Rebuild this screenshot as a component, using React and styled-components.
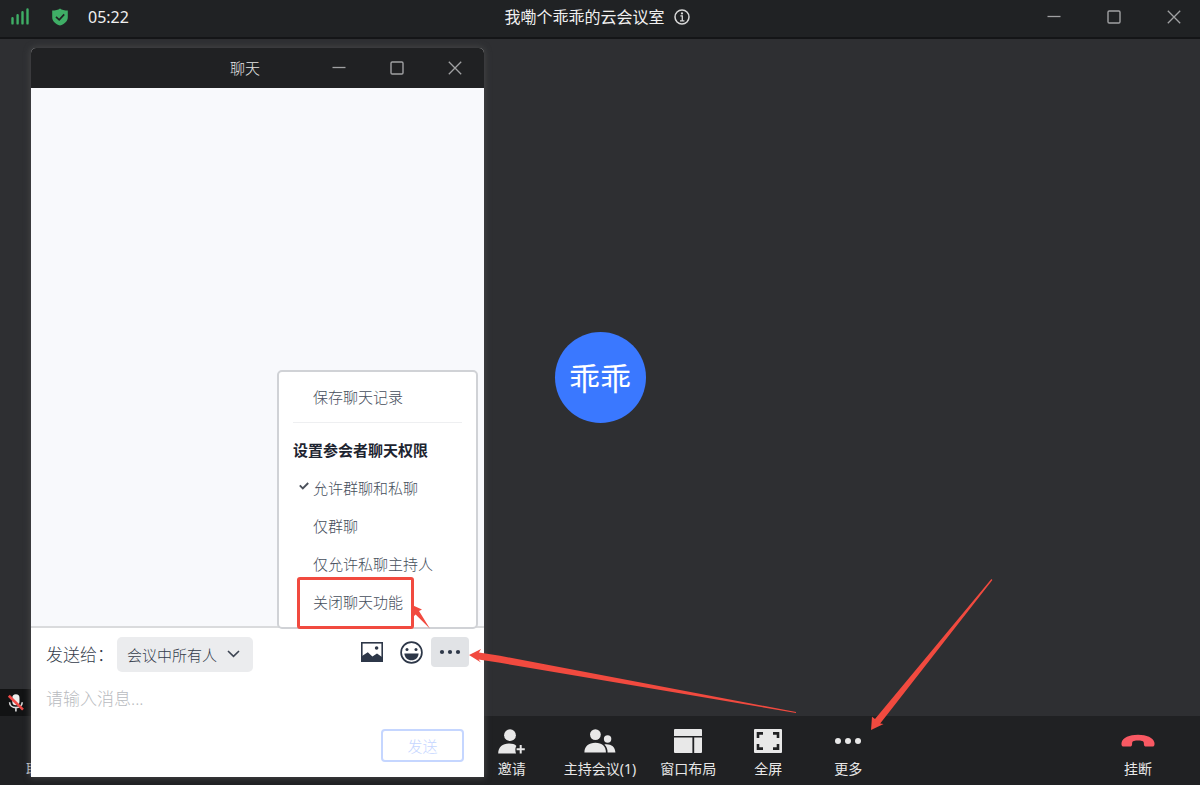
import React from "react";
import styled, { createGlobalStyle } from "styled-components";

const GlobalStyle = createGlobalStyle`
  *, *::before, *::after { box-sizing: border-box; }
  body {
    margin: 0;
    background: #2e2f32;
    font-family: "Noto Sans", "Noto Sans CJK SC", sans-serif;
    font-weight: 300;
  }
  button, select, textarea { font: inherit; margin: 0; padding: 0; border: 0; background: none; color: inherit; }
  h1, h2, ul, li { margin: 0; padding: 0; list-style: none; font-weight: inherit; }
  svg { display: block; }
`;

const Meeting = styled.div`
  position: relative;
  display: flex;
  flex-direction: column;
  min-height: 100vh;
  overflow: hidden;
`;

const TitleBar = styled.header`
  display: grid;
  grid-template-columns: 1fr auto 1fr;
  align-items: center;
  height: 39px;
  padding-bottom: 4px;
  background: #202224;
  border-bottom: 2px solid #141517;
  color: #f0f0f0;
`;

const Status = styled.div`
  display: flex;
  align-items: center;
  padding-left: 11px;
`;

const Timer = styled.time`
  margin-left: 20px;
  font-size: 16px;
  line-height: 24px;
  font-weight: 400;
`;

const ShieldSlot = styled.span`
  margin-left: 23px;
`;

const RoomTitle = styled.div`
  display: flex;
  align-items: center;
  gap: 9px;
  padding-right: 6px;
`;

const RoomName = styled.h1`
  font-size: 16px;
  line-height: 24px;
  font-weight: 400;
`;

const IconButton = styled.button`
  display: flex;
  align-items: center;
  justify-content: center;
  width: ${(p) => p.$width}px;
  height: ${(p) => p.$height}px;
  border-radius: 4px;
  background: ${(p) => (p.$active ? "#e1e3e6" : "transparent")};
  color: ${(p) => p.$color || "#a0a1a3"};
  cursor: pointer;
`;

const WindowControls = styled.div`
  display: flex;
  justify-content: flex-end;
  gap: ${(p) => p.$gap || 0}px;
`;

const Stage = styled.main`
  position: relative;
  flex: 1;
  display: flex;
  align-items: center;
  justify-content: center;
  background: #2e2f32;
`;

const Avatar = styled.div`
  display: flex;
  align-items: center;
  justify-content: center;
  width: 91px;
  height: 91px;
  border-radius: 50%;
  background: #3a78ff;
  color: #fff;
  font-size: 31px;
  line-height: 40px;
  font-weight: 400;
`;

const MutedBadge = styled.div`
  position: absolute;
  left: 0;
  bottom: 0;
  display: flex;
  align-items: center;
  width: 120px;
  height: 27px;
  padding-left: 7px;
  background: #121314;
`;

const ToolBar = styled.footer`
  display: grid;
  grid-template-columns: 1fr auto 1fr;
  height: 69px;
  background: #202123;
`;

const ToolGroup = styled.div`
  display: flex;
  justify-content: ${(p) => p.$justify || "flex-start"};
  padding: ${(p) => p.$padding || "0"};
`;

const Tool = styled.button`
  position: relative;
  display: flex;
  flex-direction: column;
  align-items: ${(p) => p.$align || "center"};
  min-width: 80px;
  padding: 10px 12px 0;
  color: #e8e8e8;
  cursor: pointer;
`;

const ToolIcon = styled.span`
  display: flex;
  align-items: center;
  height: 30px;
`;

const ToolLabel = styled.span`
  margin-top: 2px;
  font-size: 14px;
  line-height: 22px;
  font-weight: 400;
  white-space: nowrap;
`;

const ChatWindow = styled.section`
  position: absolute;
  left: 31px;
  top: 48px;
  bottom: 8px;
  display: flex;
  flex-direction: column;
  width: 453px;
  border-radius: 5px 5px 0 0;
  background: #fff;
  box-shadow: 0 0 6px 1px #444546;
`;

const ChatHeader = styled.header`
  display: flex;
  align-items: center;
  justify-content: flex-end;
  height: 40px;
  border-radius: 5px 5px 0 0;
  background: #202123;
  color: #e4e4e4;
`;

const ChatTitle = styled.h2`
  padding-right: 50px;
  font-size: 15px;
  line-height: 22px;
`;

const Messages = styled.div`
  flex: 1;
  background: #f8f9fc;
`;

const Composer = styled.form`
  position: relative;
  display: flex;
  flex-direction: column;
  height: 151px;
  padding: 9px 15px 15px;
  border-top: 2px solid #dadbdd;
  color: #333b4a;
`;

const ComposerRow = styled.div`
  display: flex;
  align-items: flex-start;
`;

const RecipientLabel = styled.label`
  width: 71px;
  font-size: 17px;
  line-height: 35px;
  white-space: nowrap;
`;

const RecipientField = styled.span`
  position: relative;
  svg {
    position: absolute;
    right: 13px;
    top: 13px;
    pointer-events: none;
  }
`;

const Recipient = styled.select`
  appearance: none;
  width: 136px;
  height: 35px;
  padding-left: 10px;
  border-radius: 5px;
  background: #ebecee;
  font-size: 15px;
`;

const ComposerTools = styled.div`
  display: flex;
  gap: 1px;
  margin-left: auto;
`;

const MessageInput = styled.textarea`
  flex: 1;
  min-height: 0;
  margin-top: 14px;
  resize: none;
  outline: none;
  font-size: 17px;
  line-height: 26px;
  &::placeholder { color: #b9bbc0; opacity: 1; }
`;

const SendButton = styled.button`
  align-self: flex-end;
  width: 83px;
  height: 33px;
  margin-right: 5px;
  border: 2px solid #c5d6ff;
  border-radius: 4px;
  color: #c5d6ff;
  font-size: 15px;
  line-height: 22px;
`;

const Menu = styled.div`
  position: absolute;
  right: 6px;
  bottom: 148px;
  width: 201px;
  padding: 6px 14px;
  border: 2px solid #d0d2d6;
  border-radius: 5px;
  background: #fff;
  color: #454d5b;
  font-size: 15px;
  line-height: 38px;
`;

const MenuItem = styled.button`
  position: relative;
  display: block;
  width: 100%;
  height: 38px;
  padding-left: 20px;
  text-align: left;
  cursor: pointer;
`;

const CheckSlot = styled.span`
  position: absolute;
  left: 6px;
  top: 13px;
`;

const MenuHeading = styled.h2`
  color: #1d2430;
  font-size: 15px;
  font-weight: 700;
`;

const MenuDivider = styled.hr`
  height: 1px;
  margin: 6px 0 8px;
  border: 0;
  background: #eeeff1;
`;

const Highlight = styled.span`
  position: absolute;
  left: 4px;
  top: -6px;
  width: 117px;
  height: 52px;
  border: 3px solid #f14a3f;
  border-radius: 3px;
`;

const Arrow = styled.svg`
  position: absolute;
  left: ${(p) => p.$left}px;
  top: ${(p) => p.$top}px;
  z-index: 1;
  fill: #f14a3f;
  pointer-events: none;
`;

const line = { fill: "none", stroke: "currentColor" };

const MinimizeIcon = () => (
  <svg width="14" height="14" viewBox="0 0 14 14" {...line}><path d="M0.5 6.5h13" strokeWidth="1.3" /></svg>
);
const MaximizeIcon = () => (
  <svg width="14" height="14" viewBox="0 0 14 14" {...line}><rect x="1" y="1" width="12" height="12" rx="1.2" strokeWidth="1.4" /></svg>
);
const CloseIcon = () => (
  <svg width="14" height="14" viewBox="0 0 14 14" {...line}><path d="M0.8 0.8l12.4 12.4M13.2 0.8L0.8 13.2" strokeWidth="1.3" /></svg>
);

const SignalIcon = () => (
  <svg width="18" height="17" viewBox="0 0 18 17" fill="none" stroke="#3fae66" strokeWidth="2.4" strokeLinecap="round">
    <path d="M1.5 10.2v5.2M6.6 7.2v8.2M11.5 4.3v11.1M16.5 1.4v14" />
  </svg>
);
const ShieldIcon = () => (
  <svg width="16" height="18" viewBox="0 0 16 18">
    <path d="M8 0.4C9.8 1.9 12.6 2.4 15.8 2.4V9.2C15.8 13.2 12.6 16 8 17.6C3.4 16 0.2 13.2 0.2 9.2V2.4C3.4 2.4 6.2 1.9 8 0.4Z" fill="#3fae66" />
    <path d="M4 8.8l3.2 3 5-5.4" fill="none" stroke="#202224" strokeWidth="1.7" />
  </svg>
);
const InfoIcon = () => (
  <svg width="16" height="16" viewBox="0 0 16 16" fill="none" stroke="#d8d8d8">
    <circle cx="8" cy="8" r="7" strokeWidth="1.5" />
    <path d="M6.4 6.9H8.3V11.6M6 11.8h4.4" strokeWidth="1.3" />
    <circle cx="8" cy="4.4" r="1.1" fill="#d8d8d8" stroke="none" />
  </svg>
);
const MutedMicIcon = () => (
  <svg width="18" height="18" viewBox="0 0 18 18" fill="none">
    <rect x="5.3" y="0.3" width="7.2" height="11" rx="3.6" fill="#eee" />
    <path d="M2.6 8.2c0 3.4 2.8 5.4 6.3 5.4s6.3-2 6.3-5.4M8.9 13.6v3.9" stroke="#ddd" strokeWidth="1.6" />
    <path d="M1.8 1.8L16 15.6" stroke="#f04b48" strokeWidth="2.6" />
  </svg>
);
const InviteIcon = () => (
  <svg width="27" height="25" viewBox="0 0 27 25" fill="currentColor">
    <circle cx="12" cy="6.2" r="5.9" />
    <path d="M0.2 24.6C0.2 18 4.6 14.6 11 14.6C14.2 14.6 17 15.3 18.4 17C17.2 18.6 17 22 18 24.6Z" />
    <path d="M18.6 20.2h8.2M22.7 16v8.4" stroke="currentColor" strokeWidth="2" />
  </svg>
);
const HostIcon = () => (
  <svg width="32" height="24" viewBox="0 0 32 24" fill="currentColor">
    <circle cx="11.4" cy="5.6" r="5.4" />
    <circle cx="23.6" cy="10" r="3.7" />
    <path d="M0.4 23.6C0.4 17.2 4.6 13.8 11.4 13.8S21.9 17.2 21.9 23.6Z" />
    <path d="M20.4 15.4C26.6 14.6 31.2 17.4 31.4 23.6H23.6C23.6 20.2 22.8 17.6 20.4 15.4Z" />
  </svg>
);
const LayoutIcon = () => (
  <svg width="28" height="24" viewBox="0 0 28 24" fill="currentColor">
    <path d="M1 0H27a1 1 0 0 1 1 1V7H0V1A1 1 0 0 1 1 0ZM0 8.6H18.4V24H1A1 1 0 0 1 0 23ZM20.2 8.6H28V23a1 1 0 0 1-1 1H20.2Z" />
  </svg>
);
const FullscreenIcon = () => (
  <svg width="28" height="24" viewBox="0 0 28 24">
    <rect width="28" height="24" rx="1" fill="#e8e8e8" />
    <path d="M4 9V4.4H9M19 4.4h5V9M24 15v4.6H19M9 19.6H4V15" fill="none" stroke="#202123" strokeWidth="2.6" />
  </svg>
);
const MoreIcon = ({ width, r, gap }) => (
  <svg width={width} height="8" viewBox={`0 0 ${width} 8`} fill="currentColor">
    {[-1, 0, 1].map((i) => <circle key={i} cx={width / 2 + i * gap} cy="4" r={r} />)}
  </svg>
);
const HangUpIcon = () => (
  <svg width="34" height="14" viewBox="0 0 34 14">
    <path d="M0.6 8.6C1.6 3.6 8.4 0.8 17 0.8S32.4 3.6 33.4 8.6C33.8 10.8 33.4 12.6 31.8 12.6H25.4C23.6 12.6 22.8 11.6 22.9 10C23 8.2 22.6 7.2 21 6.9C18.4 6.4 15.6 6.4 13 6.9C11.4 7.2 11 8.2 11.1 10C11.2 11.6 10.4 12.6 8.6 12.6H2.2C0.6 12.6 0.2 10.8 0.6 8.6Z" fill="#f95963" />
  </svg>
);
const ImageIcon = () => (
  <svg width="22" height="20" viewBox="0 0 22 20">
    <rect x="0.8" y="0.8" width="20.4" height="18.4" fill="none" stroke="currentColor" strokeWidth="1.6" />
    <circle cx="15.6" cy="6" r="1.8" fill="currentColor" />
    <path d="M1 14L6.8 10.2L11.4 14.6L16 11.4L21 15V19.4H1Z" fill="currentColor" />
  </svg>
);
const SmileIcon = () => (
  <svg width="23" height="23" viewBox="0 0 23 23">
    <circle cx="11.5" cy="11.5" r="10.4" fill="none" stroke="currentColor" strokeWidth="1.7" />
    <circle cx="7" cy="8.6" r="1.5" fill="currentColor" />
    <circle cx="16" cy="8.6" r="1.5" fill="currentColor" />
    <path d="M4.4 12.4H18.6C18.4 16.6 15.4 19.2 11.5 19.2S4.6 16.6 4.4 12.4Z" fill="currentColor" />
  </svg>
);
const ChevronIcon = () => (
  <svg width="13" height="8" viewBox="0 0 13 8" fill="none" stroke="#3c4452" strokeWidth="1.6"><path d="M1 1l5.5 5.4L12 1" /></svg>
);
const CheckIcon = () => (
  <svg width="10" height="8" viewBox="0 0 10 8" fill="none" stroke="#4b515b" strokeWidth="1.9"><path d="M0.8 3.4l3 3L9.2 1" /></svg>
);

const Controls = ({ width, gap }) => (
  <WindowControls $gap={gap}>
    <IconButton type="button" aria-label="最小化" $width={width} $height={32}><MinimizeIcon /></IconButton>
    <IconButton type="button" aria-label="最大化" $width={width} $height={32}><MaximizeIcon /></IconButton>
    <IconButton type="button" aria-label="关闭" $width={width} $height={32}><CloseIcon /></IconButton>
  </WindowControls>
);

const ToolButton = ({ icon, label, align, children }) => (
  <Tool type="button" $align={align}>
    <ToolIcon>{icon}</ToolIcon>
    <ToolLabel>{label}</ToolLabel>
    {children}
  </Tool>
);

const ChatMenu = () => (
  <Menu>
    <MenuItem type="button">保存聊天记录</MenuItem>
    <MenuDivider />
    <MenuHeading>设置参会者聊天权限</MenuHeading>
    <ul>
      <li><MenuItem type="button"><CheckSlot><CheckIcon /></CheckSlot>允许群聊和私聊</MenuItem></li>
      <li><MenuItem type="button">仅群聊</MenuItem></li>
      <li><MenuItem type="button">仅允许私聊主持人</MenuItem></li>
      <li>
        <MenuItem type="button">
          关闭聊天功能
          <Highlight />
          <Arrow $left={118} $top={21} width="22" height="26" viewBox="0 0 22 26">
            <path d="M1 1L11 5.4L8 7L19 24.8L4.6 10.4L2 13Z" />
          </Arrow>
        </MenuItem>
      </li>
    </ul>
  </Menu>
);

const Chat = () => (
  <ChatWindow>
    <ChatHeader>
      <ChatTitle>聊天</ChatTitle>
      <Controls width={58} />
    </ChatHeader>
    <Messages />
    <Composer onSubmit={(e) => e.preventDefault()}>
      <ComposerRow>
        <RecipientLabel htmlFor="recipient">发送给：</RecipientLabel>
        <RecipientField>
          <Recipient id="recipient"><option>会议中所有人</option></Recipient>
          <ChevronIcon />
        </RecipientField>
        <ComposerTools>
          <IconButton type="button" aria-label="图片" $width={38} $height={30} $color="#2d3748"><ImageIcon /></IconButton>
          <IconButton type="button" aria-label="表情" $width={38} $height={30} $color="#2d3748"><SmileIcon /></IconButton>
          <IconButton type="button" aria-label="更多选项" $width={38} $height={30} $color="#2d3748" $active>
            <MoreIcon width={22} r={2.1} gap={8} />
          </IconButton>
        </ComposerTools>
      </ComposerRow>
      <MessageInput aria-label="消息" placeholder="请输入消息..." />
      <SendButton type="submit">发送</SendButton>
      <ChatMenu />
      <Arrow $left={438} $top={20} width="328" height="66" viewBox="0 0 328 66">
        <path d="M0 7L12 1L10 4.6L31 7.8L327 64L327 65L31 14.8L9.6 11.4L12 14.4Z" />
      </Arrow>
    </Composer>
  </ChatWindow>
);

export default function App() {
  return (
    <>
      <GlobalStyle />
      <Meeting>
        <TitleBar>
          <Status>
            <SignalIcon />
            <ShieldSlot><ShieldIcon /></ShieldSlot>
            <Timer>05:22</Timer>
          </Status>
          <RoomTitle>
            <RoomName>我嘞个乖乖的云会议室</RoomName>
            <InfoIcon />
          </RoomTitle>
          <Controls width={52} gap={8} />
        </TitleBar>
        <Stage>
          <Avatar>乖乖</Avatar>
          <MutedBadge><MutedMicIcon /></MutedBadge>
        </Stage>
        <ToolBar>
          <ToolGroup $padding="0 0 0 14px">
            <ToolButton align="flex-start" label="取" />
          </ToolGroup>
          <ToolGroup $padding="0 0 0 160px">
            <ToolButton icon={<InviteIcon />} label="邀请" />
            <ToolButton icon={<HostIcon />} label="主持会议(1)" />
            <ToolButton icon={<LayoutIcon />} label="窗口布局" />
            <ToolButton icon={<FullscreenIcon />} label="全屏" />
            <ToolButton icon={<MoreIcon width={28} r={3} gap={10} />} label="更多">
              <Arrow $left={62} $top={-137} width="124" height="153" viewBox="0 0 124 153">
                <path d="M1 151L2 137.7L5 140L121.4 0L122.4 1L10.2 144.4L13.6 145Z" />
              </Arrow>
            </ToolButton>
          </ToolGroup>
          <ToolGroup $justify="flex-end" $padding="0 22px 0 0">
            <ToolButton icon={<HangUpIcon />} label="挂断" />
          </ToolGroup>
        </ToolBar>
        <Chat />
      </Meeting>
    </>
  );
}
